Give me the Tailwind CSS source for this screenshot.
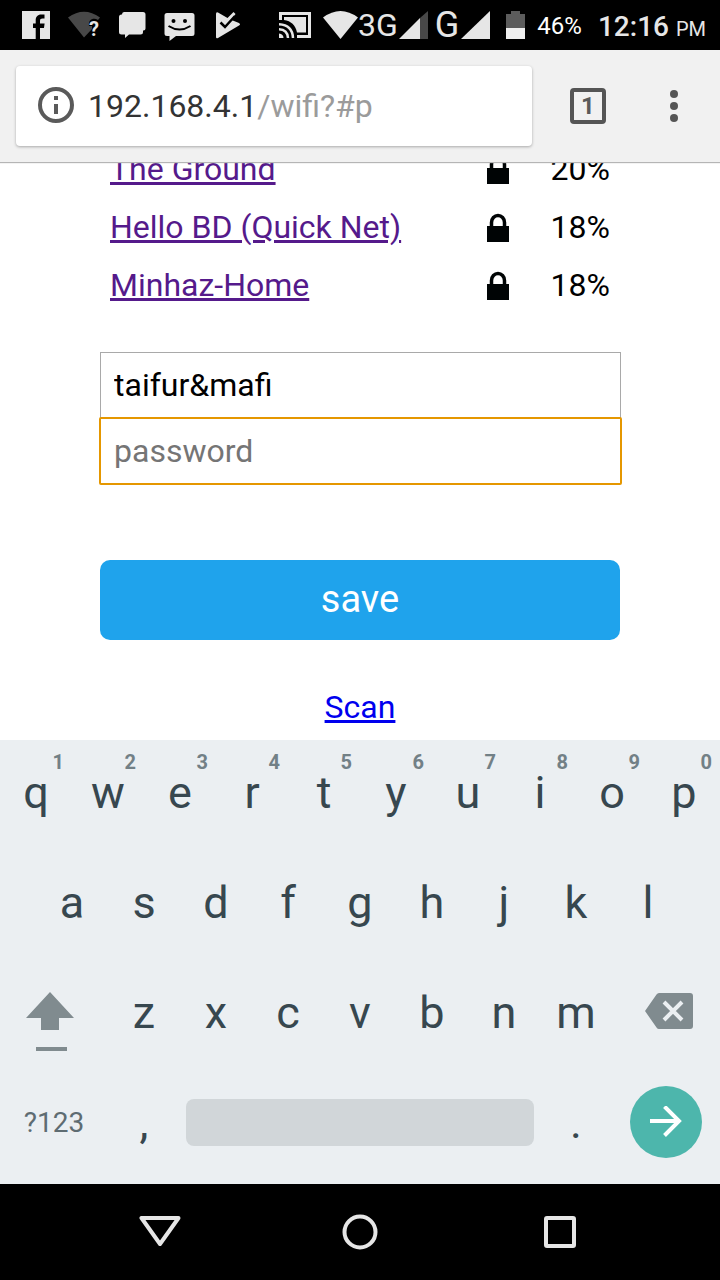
<!DOCTYPE html>
<html lang="en">
<head>
<meta charset="utf-8">
<meta name="viewport" content="width=device-width, initial-scale=1">
<title>WiFi setup</title>
<script src="https://cdn.jsdelivr.net/npm/@tailwindcss/browser@4"></script>
</head>
<body class="flex h-screen flex-col overflow-hidden bg-white font-['Roboto',sans-serif] text-black">

<!-- Status bar -->
<div class="flex h-[50px] flex-none items-center justify-between bg-black pl-[22px] pr-3.5 text-[#e6e6e6]">
  <div class="flex items-center">
    <svg class="mr-[18px] h-7 w-7" viewBox="0 0 28 28"><path fill="#e6e6e6" d="M0 0h28v28H18V17h4l.6-4.500H18V10c0-1.800.8-2.500 2.500-2.500H22.500V3.400h-3.200C15.500 3.400 13.700 6 13.700 9v3.500H11V17h2.700v11H0z"/></svg>
    <svg class="mr-4 h-8 w-[34px]" viewBox="0 0 34 32"><path fill="#484848" d="M0 8.500Q16-3 32 8.500L30 11c-5-3-10 0-9 6h3v3l-8 8.500z"/><text x="21" y="27" fill="#e6e6e6" font-family="Roboto" font-size="20" font-weight="700">?</text></svg>
    <svg class="mr-[18px] h-7 w-7" viewBox="0 0 28 28"><path fill="#e6e6e6" d="M6 1h19a2.500 2.500 0 0 1 2.500 2.500v14a2 2 0 0 1-2 2H25v1.500a2.500 2.500 0 0 1-2.500 2.500H11L7 27v-3.500H3.500A2.500 2.500 0 0 1 1 21V6a2.500 2.500 0 0 1 2.500-2.500H4A2.500 2.500 0 0 1 6 1z"/></svg>
    <svg class="mr-5 h-8 w-[31px]" viewBox="0 0 31 32"><path fill="#e6e6e6" d="M3 4h25a2.500 2.500 0 0 1 2.500 2.500v18A2.500 2.500 0 0 1 28 27H12l-6.500 5v-5H3a2.500 2.500 0 0 1-2.500-2.500v-18A2.500 2.500 0 0 1 3 4z"/><circle cx="9.500" cy="12" r="2"/><circle cx="21" cy="12" r="2"/><path fill="none" stroke="#000" stroke-width="2" d="M4.500 17q11 7 22 0"/></svg>
    <svg class="h-7 w-[26px]" viewBox="0 0 26 28"><path fill="#e6e6e6" d="M1 3Q1 0.500 3 1.500l9.500 5.500L18.500 1l2 2-4 6L24 12q2 1.500 0 2.500L3 27q-2 .8-2-1z"/><path fill="none" stroke="#000" stroke-width="2.500" d="M5.500 11.500l4.500 4.500 10-11"/></svg>
  </div>
  <div class="flex items-center">
    <svg class="mr-3 h-[26px] w-8" viewBox="0 0 32 26"><path fill="none" stroke="#e6e6e6" stroke-width="3" d="M1.500 8V1.500h29v23H18"/><path fill="#e6e6e6" d="M5 5h22v15.500H18C16.500 13 12 9 5 8zM0 21.500Q4.500 22 4.500 26H0z"/><path fill="none" stroke="#e6e6e6" stroke-width="2.500" d="M0 17.200Q8.500 17.500 9 26M0 12.200Q13.500 13 14 26"/></svg>
    <svg class="h-7 w-[35px]" viewBox="0 0 35 28"><path fill="#e6e6e6" d="M0 6.500Q17.500-6.500 35 6.500L17.500 28z"/></svg>
    <span class="text-[32px] leading-none">3G</span>
    <svg class="ml-px h-7 w-[29px]" viewBox="0 0 29 28"><path fill="#e6e6e6" d="M0 28L21 7v21z"/><path fill="#484848" d="M21 7l8-7v28h-8z"/></svg>
    <span class="ml-[7px] mr-0.5 text-[36px] leading-none">G</span>
    <svg class="mr-4 h-7 w-[29px]" viewBox="0 0 29 28"><path fill="#e6e6e6" d="M0 28L29 0v28z"/></svg>
    <svg class="mr-3 h-7 w-[19px]" viewBox="0 0 19 28"><path fill="#5c5c5c" d="M0 3h5V0h9v3h5v14H0z"/><path fill="#efefef" d="M0 17h19v11H0z"/></svg>
    <span class="mr-4 pt-0.5 text-[24px] leading-none text-white">46%</span>
    <span class="pt-1 text-[28px] font-medium leading-none">12:16 <span class="text-[20px] font-normal">PM</span></span>
  </div>
</div>

<!-- Browser toolbar -->
<header class="z-10 flex h-28 flex-none items-center bg-[#f1f1f1] pl-4 pr-[34px] shadow-[0_1px_1px_#b5b5b5]">
  <div class="flex h-20 flex-1 items-center rounded-[4px] bg-white pl-[22px] shadow-[0_1px_3px_rgba(0,0,0,0.3)]">
    <button aria-label="Site information" class="mr-3.5 pb-0.5"><svg class="h-9 w-9" viewBox="0 0 36 36"><circle cx="18" cy="18" r="16" fill="none" stroke="#5a5a5a" stroke-width="4"/><path fill="#5a5a5a" d="M16 9h4v4h-4zM16 17h4v10h-4z"/></svg></button>
    <a href="#p" class="text-[32px] leading-10 text-[#333]">192.168.4.1<span class="text-[#9b9b9b]">/wifi?#p</span></a>
  </div>
  <button aria-label="Open tabs" class="ml-[38px] flex h-9 w-9 items-center justify-center rounded-[4px] border-4 border-[#555] text-[24px] font-bold leading-none text-[#5a5a5a]">1</button>
  <button aria-label="Menu" class="ml-14 flex w-6 flex-col items-center gap-1">
    <span class="h-2 w-2 rounded-full bg-[#555]"></span><span class="h-2 w-2 rounded-full bg-[#555]"></span><span class="h-2 w-2 rounded-full bg-[#555]"></span>
  </button>
</header>

<!-- Page, scrolled to its end -->
<main class="flex min-h-0 flex-1 flex-col justify-end overflow-hidden">
  <div class="mx-auto w-full max-w-[520px] flex-none pb-3 text-[32px] leading-10">
    <table class="w-full">
      <tbody>
        <tr class="h-[58px]"><td class="pl-2.5"><a href="#p" class="text-[#551a8b] underline">The Ground</a></td><td class="w-14"><svg class="mx-auto h-[30px] w-[22px]" viewBox="0 0 22 30"><path fill="#000405" d="M0 14h22v16H0z"/><path fill="none" stroke="#000405" stroke-width="3.500" d="M4.500 15V10.500a6.500 7 0 0 1 13 0V15"/></svg></td><td class="w-[94px] pr-2.5 text-right">20%</td></tr>
        <tr class="h-[58px]"><td class="pl-2.5"><a href="#p" class="text-[#551a8b] underline">Hello BD (Quick Net)</a></td><td class="w-14"><svg class="mx-auto h-[30px] w-[22px]" viewBox="0 0 22 30"><path fill="#000405" d="M0 14h22v16H0z"/><path fill="none" stroke="#000405" stroke-width="3.500" d="M4.500 15V10.500a6.500 7 0 0 1 13 0V15"/></svg></td><td class="w-[94px] pr-2.5 text-right">18%</td></tr>
        <tr class="h-[58px]"><td class="pl-2.5"><a href="#p" class="text-[#551a8b] underline">Minhaz-Home</a></td><td class="w-14"><svg class="mx-auto h-[30px] w-[22px]" viewBox="0 0 22 30"><path fill="#000405" d="M0 14h22v16H0z"/><path fill="none" stroke="#000405" stroke-width="3.500" d="M4.500 15V10.500a6.500 7 0 0 1 13 0V15"/></svg></td><td class="w-[94px] pr-2.5 text-right">18%</td></tr>
      </tbody>
    </table>
    <form class="mt-[38px] flex flex-col">
      <input type="text" aria-label="SSID" value="taifur&amp;mafi" class="-mr-px h-[66px] border border-[#a9a9a9] px-[13px] outline-none">
      <input type="password" aria-label="Password" placeholder="password" class="-mr-px h-[66px] rounded-[1px] border border-[#a9a9a9] px-[13px] outline-2 outline-offset-[-1px] outline-[#e59700] placeholder:text-[#757575]">
      <button type="button" class="mt-[76px] h-20 rounded-[10px] bg-[#1fa3ec] pb-0.5 text-[38px] text-white">save</button>
    </form>
    <div class="mt-[47px] pb-px text-center"><a href="#p" class="text-[#0000ee] underline">Scan</a></div>
  </div>
</main>

<!-- Keyboard -->
<section aria-label="Keyboard" class="flex flex-none flex-col gap-1.5 bg-[#ebeff2] pb-2.5 text-[45px] leading-none text-[#37474f]">
  <div class="grid h-[104px] grid-cols-10">
    <button class="relative">q<span class="absolute right-2 top-3 text-[20px] font-bold leading-5 text-[#728086]">1</span></button>
    <button class="relative">w<span class="absolute right-2 top-3 text-[20px] font-bold leading-5 text-[#728086]">2</span></button>
    <button class="relative">e<span class="absolute right-2 top-3 text-[20px] font-bold leading-5 text-[#728086]">3</span></button>
    <button class="relative">r<span class="absolute right-2 top-3 text-[20px] font-bold leading-5 text-[#728086]">4</span></button>
    <button class="relative">t<span class="absolute right-2 top-3 text-[20px] font-bold leading-5 text-[#728086]">5</span></button>
    <button class="relative">y<span class="absolute right-2 top-3 text-[20px] font-bold leading-5 text-[#728086]">6</span></button>
    <button class="relative">u<span class="absolute right-2 top-3 text-[20px] font-bold leading-5 text-[#728086]">7</span></button>
    <button class="relative">i<span class="absolute right-2 top-3 text-[20px] font-bold leading-5 text-[#728086]">8</span></button>
    <button class="relative">o<span class="absolute right-2 top-3 text-[20px] font-bold leading-5 text-[#728086]">9</span></button>
    <button class="relative">p<span class="absolute right-2 top-3 text-[20px] font-bold leading-5 text-[#728086]">0</span></button>
  </div>
  <div class="grid h-[104px] grid-cols-9 px-[5%]">
    <button>a</button><button>s</button><button>d</button><button>f</button><button>g</button><button>h</button><button>j</button><button>k</button><button>l</button>
  </div>
  <div class="grid h-[104px] grid-cols-20">
    <button aria-label="Shift" class="col-span-3 flex items-center pl-[26px] pt-5"><svg class="h-[60px] w-12" viewBox="0 0 48 60"><path fill="#808b8f" d="M24 0l24 26H33v12H15V26H0zM10 55h31v4H10z"/></svg></button>
    <button class="col-span-2">z</button><button class="col-span-2">x</button><button class="col-span-2">c</button><button class="col-span-2">v</button><button class="col-span-2">b</button><button class="col-span-2">n</button><button class="col-span-2">m</button>
    <button aria-label="Backspace" class="col-span-3 flex items-center justify-end pb-0.5 pr-[27px]"><svg class="h-9 w-12" viewBox="0 0 48 36"><path fill="#808b8f" d="M14 0h31q3 0 3 3v30q0 3-3 3H14q-1.500 0-2.500-1.500L0 18 11.500 1.500Q12.500 0 14 0z"/><path stroke="#ebeff2" stroke-width="4" d="M19 9l18 18M37 9L19 27"/></svg></button>
  </div>
  <div class="grid h-[104px] grid-cols-20 items-center">
    <button class="col-span-3 pt-0.5 text-[28px] text-[#5e6c72]">?123</button>
    <button class="col-span-2">,</button>
    <button aria-label="Space" class="col-span-10 mx-1.5 h-[47px] rounded-[8px] bg-[#d1d6d9]"></button>
    <button class="col-span-2">.</button>
    <button aria-label="Go" class="col-span-3 ml-auto mr-[18px] flex h-[72px] w-[72px] items-center justify-center rounded-full bg-[#4db6ac]"><svg class="h-8 w-8" viewBox="0 0 32 32"><path fill="none" stroke="#fff" stroke-width="4" d="M0 15h29M14.500 0.500L29 15 14.500 29.500"/></svg></button>
  </div>
</section>

<!-- System navigation -->
<nav class="flex h-24 flex-none items-center justify-center gap-[158px] bg-black">
  <button aria-label="Back"><svg class="h-[42px] w-[42px]" viewBox="0 0 42 42"><path fill="none" stroke="#e6e6e6" stroke-width="4" stroke-linejoin="round" d="M2.500 7h37L21 33z"/></svg></button>
  <button aria-label="Home"><svg class="h-[42px] w-[42px]" viewBox="0 0 42 42"><circle cx="21" cy="21" r="15.500" fill="none" stroke="#e6e6e6" stroke-width="4"/></svg></button>
  <button aria-label="Recent apps"><svg class="h-[42px] w-[42px]" viewBox="0 0 42 42"><rect x="7" y="7" width="28" height="28" rx="1" fill="none" stroke="#e6e6e6" stroke-width="4"/></svg></button>
</nav>
</body>
</html>
